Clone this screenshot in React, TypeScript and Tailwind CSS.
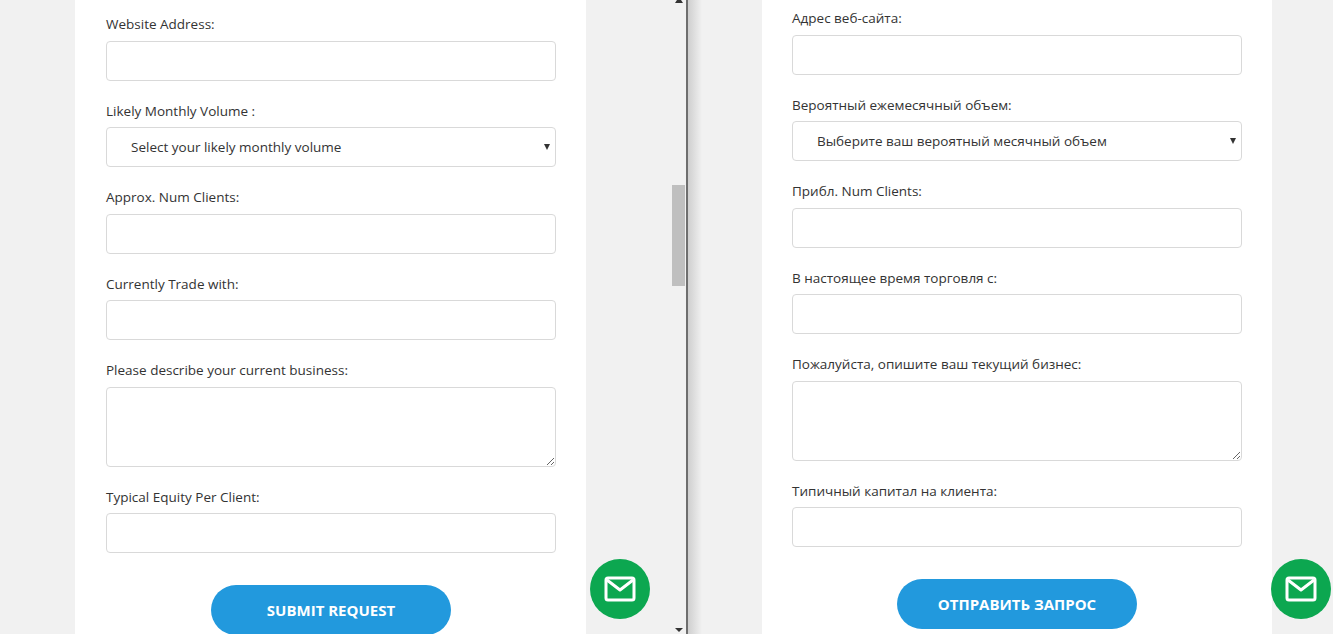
import type { ReactNode } from "react";

type Copy = {
  website: string;
  volume: string;
  volumePlaceholder: string;
  clients: string;
  trade: string;
  business: string;
  equity: string;
  submit: string;
};

const en: Copy = {
  website: "Website Address:",
  volume: "Likely Monthly Volume :",
  volumePlaceholder: "Select your likely monthly volume",
  clients: "Approx. Num Clients:",
  trade: "Currently Trade with:",
  business: "Please describe your current business:",
  equity: "Typical Equity Per Client:",
  submit: "SUBMIT REQUEST",
};

const ru: Copy = {
  website: "Адрес веб-сайта:",
  volume: "Вероятный ежемесячный объем:",
  volumePlaceholder: "Выберите ваш вероятный месячный объем",
  clients: "Прибл. Num Clients:",
  trade: "В настоящее время торговля с:",
  business: "Пожалуйста, опишите ваш текущий бизнес:",
  equity: "Типичный капитал на клиента:",
  submit: "ОТПРАВИТЬ ЗАПРОС",
};

function Field(props: { label: string; children: ReactNode }) {
  return (
    <div className="mb-[20.2px]">
      <label className="block h-[20px] mb-[6.3px] text-[13.5px] leading-[20px] text-[#333]">{props.label}</label>
      {props.children}
    </div>
  );
}

const inputClass = "block w-full h-[40px] bg-white border border-[#d9d9d9] rounded-[4px]";

function RequestForm(props: { copy: Copy }) {
  const { copy } = props;
  return (
    <form className="w-[450px]">
      <Field label={copy.website}>
        <input type="text" className={inputClass} />
      </Field>
      <Field label={copy.volume}>
        <div className="relative">
          <select className={`${inputClass} appearance-none pl-[24px] pt-[1px] text-[13.5px] text-[#333]`}>
            <option>{copy.volumePlaceholder}</option>
          </select>
          <span className="absolute right-[6px] top-[17px] w-0 h-0 border-x-[3.5px] border-x-transparent border-t-[6px] border-t-[#333]" />
        </div>
      </Field>
      <Field label={copy.clients}>
        <input type="text" className={inputClass} />
      </Field>
      <Field label={copy.trade}>
        <input type="text" className={inputClass} />
      </Field>
      <Field label={copy.business}>
        <textarea className="block w-full h-[80px] bg-white border border-[#d9d9d9] rounded-[4px]" />
      </Field>
      <Field label={copy.equity}>
        <input type="text" className={inputClass} />
      </Field>
      <div className="flex justify-center pt-[11.8px]">
        <button type="button" className="w-[240px] h-[50px] shrink-0 rounded-full bg-[#2299dd] text-white text-[15px] font-bold">
          {copy.submit}
        </button>
      </div>
    </form>
  );
}

function MailButton(props: { className: string }) {
  return (
    <div className={`absolute w-[60px] h-[60px] rounded-full bg-[#0ca750] flex items-center justify-center ${props.className}`}>
      <svg width="32" height="26" viewBox="0 0 32 26" fill="none" stroke="white" strokeWidth="3" strokeLinejoin="round">
        <rect x="2" y="2" width="28" height="22" rx="2" />
        <path d="M3 4l13 10L29 4" />
      </svg>
    </div>
  );
}

export default function App() {
  return (
    <div className="flex h-[634px] w-[1333px] overflow-hidden bg-[#f1f1f1] font-['Open_Sans',sans-serif]">
      <div className="relative w-[688px] shrink-0 overflow-hidden border-r-2 border-[#6e6e6e]">
        <div className="ml-[75px] w-[511px] h-[700px] bg-white pl-[31px] pt-[14.3px]">
          <RequestForm copy={en} />
        </div>
        <MailButton className="left-[590px] top-[559px]" />
        <div className="absolute right-[1px] top-0 bottom-0 w-[13px] flex flex-col items-center justify-between">
          <span className="w-0 h-0 -mt-[3px] border-x-[4px] border-x-transparent border-b-[6px] border-b-[#333]" />
          <span className="absolute top-[185px] left-0 w-[13px] h-[101px] bg-[#bfbfbf]" />
          <span className="w-0 h-0 mb-[2px] border-x-[4px] border-x-transparent border-t-[4px] border-t-[#333]" />
        </div>
      </div>
      <div className="relative flex-1 overflow-hidden bg-gradient-to-r from-[#cfcfcf] to-[#f1f1f1] to-[14px]">
        <div className="ml-[74px] w-[510px] h-[700px] bg-white pl-[30px] pt-[8.3px]">
          <RequestForm copy={ru} />
        </div>
        <MailButton className="left-[583px] top-[559px]" />
      </div>
    </div>
  );
}
